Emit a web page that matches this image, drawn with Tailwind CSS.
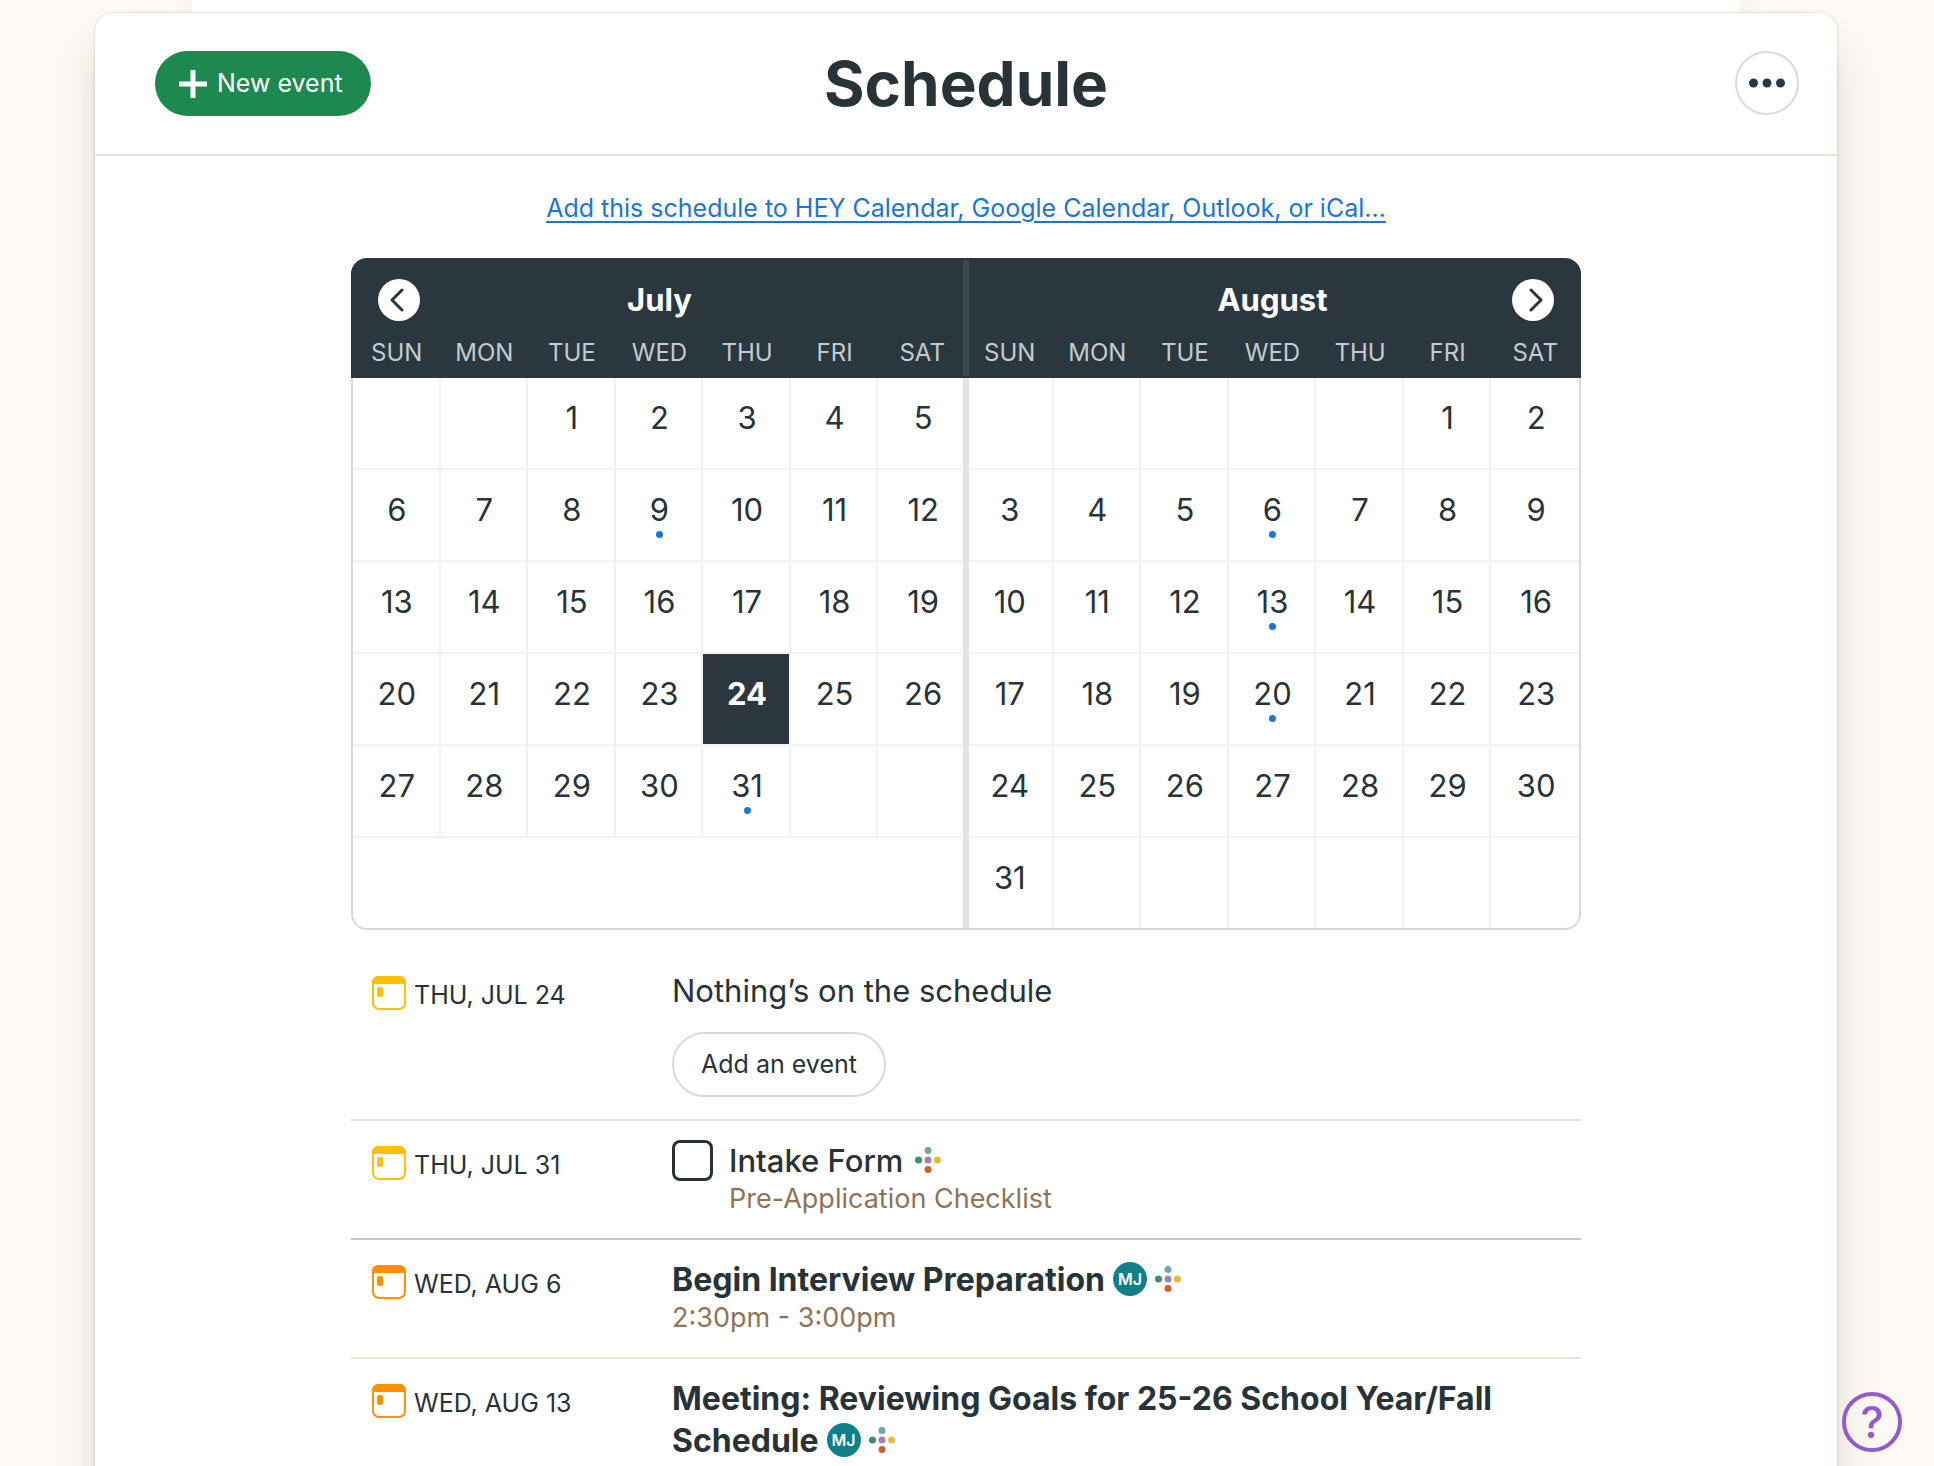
<!DOCTYPE html>
<html lang="en">
<head>
    <meta charset="UTF-8">
    <meta name="viewport" content="width=device-width, initial-scale=1.0">
    <title>Schedule</title>
    <script src="https://cdn.jsdelivr.net/npm/@tailwindcss/browser@4"></script>
</head>
<body class="bg-[#fcf9f5] font-['Inter',sans-serif] text-[#283338] overflow-x-hidden">
    <svg class="hidden">
        <symbol id="cal" viewBox="0 0 34 34">
            <rect x="1" y="1" width="32" height="32" rx="6" fill="none" stroke="currentColor" stroke-width="2"/>
            <path d="M0 8V6a6 6 0 0 1 6-6h22a6 6 0 0 1 6 6v2z" fill="currentColor"/>
            <rect x="5" y="11" width="6" height="10" rx="2" fill="currentColor"/>
        </symbol>
        <symbol id="dots" viewBox="0 0 26 26">
            <circle cx="13" cy="3.500" r="3.500" fill="#6fa5ae"/>
            <circle cx="3.500" cy="13" r="3.500" fill="#3f8f6f"/>
            <circle cx="13" cy="13" r="3.500" fill="#a67fb5"/>
            <circle cx="22.500" cy="13" r="3.500" fill="#e3bb35"/>
            <circle cx="13" cy="22.500" r="3.500" fill="#cf5f2c"/>
        </symbol>
    </svg>

    <!-- Parent sheet -->
    <div class="mr-[194px] ml-[192px] h-[13px] bg-white shadow-[0_0_24px_rgba(90,60,20,0.14)]"></div>

    <!-- Schedule sheet -->
    <main class="relative mr-[97px] ml-[95px] rounded-t-[18px] bg-white pb-6 shadow-[0_0_3px_rgba(90,60,20,0.25),0_36px_40px_rgba(90,60,20,0.16)]">
        <header class="grid grid-cols-[1fr_auto_1fr] items-start border-b-2 border-[#efe1d8] p-[38px]">
            <button class="ml-[22px] flex h-[65px] items-center gap-[10px] justify-self-start rounded-full bg-[#1d8850] pr-7 pl-6 text-[25px] text-white">
                <svg class="size-[28px]" viewBox="0 0 28 28" stroke="currentColor" stroke-width="5"><path d="M14 0v28M0 14h28"/></svg>
                New event
            </button>
            <h1 class="text-[62px] leading-[65px] font-bold">Schedule</h1>
            <button class="flex size-[64px] items-center justify-center justify-self-end rounded-full border-2 border-[#d9d9d9]" aria-label="More options">
                <svg class="h-[10px] w-[36px]" viewBox="0 0 36 10" fill="#283840"><circle cx="4.500" cy="5" r="4.500"/><circle cx="18" cy="5" r="4.500"/><circle cx="31.500" cy="5" r="4.500"/></svg>
            </button>
        </header>

        <div class="mx-auto max-w-[1230px]">
            <p class="pt-8 pb-[30px] text-center text-[25px] leading-10">
                <a href="#" class="text-[#1b76d2] underline underline-offset-4">Add this schedule to HEY Calendar, Google Calendar, Outlook, or iCal…</a>
            </p>

            <!-- Two month calendar -->
            <section class="relative rounded-[16px] border-2 border-t-0 border-[#d9d9d9]">
                <div class="-mx-[2px] grid grid-cols-2 rounded-t-[16px] bg-[#2b373e] px-[2px] text-white">
                    <div class="flex h-[83px] items-center">
                        <button class="ml-[25px] flex size-[42px] items-center justify-center rounded-full bg-white" aria-label="Previous month">
                            <svg class="size-[24px]" viewBox="0 0 24 24" fill="none" stroke="#2b373e" stroke-width="3" stroke-linecap="round" stroke-linejoin="round"><path d="M15 2L5 12l10 10"/></svg>
                        </button>
                        <h2 class="mr-[67px] flex-1 pt-[2px] text-center text-[31px] font-bold">July</h2>
                    </div>
                    <div class="flex h-[83px] items-center">
                        <h2 class="ml-[67px] flex-1 pt-[2px] text-center text-[31px] font-bold">August</h2>
                        <button class="mr-[25px] flex size-[42px] items-center justify-center rounded-full bg-white" aria-label="Next month">
                            <svg class="size-[24px]" viewBox="0 0 24 24" fill="none" stroke="#2b373e" stroke-width="3" stroke-linecap="round" stroke-linejoin="round"><path d="M10 2l10 10-10 10"/></svg>
                        </button>
                    </div>
                </div>
                <div class="grid grid-cols-2 items-start" id="months"></div>
                <div class="absolute inset-y-0 left-1/2 flex w-[6px] -translate-x-1/2 flex-col">
                    <div class="mt-[2px] h-[116px] bg-[#3d484f]"></div>
                    <div class="mt-[2px] flex-1 bg-[#e3e3e3]"></div>
                </div>
            </section>

            <!-- Agenda -->
            <ul>
                <li class="flex border-b-2 border-[#efe1d8] pt-[40px] pb-[22px] pl-[21px]">
                    <div class="flex w-[300px] items-center gap-2 self-start pt-[6px] text-[25px] leading-[36px]">
                        <svg class="mb-[3px] size-[34px] text-[#ffc000]"><use href="#cal"/></svg>THU, JUL 24
                    </div>
                    <div>
                        <p class="text-[31px] leading-[42px]">Nothing’s on the schedule</p>
                        <button class="mt-[20px] h-[65px] rounded-full border-2 border-[#d9d9d9] px-[27px] text-[25px]">Add an event</button>
                    </div>
                </li>
                <li class="flex border-b-2 border-[#d3c4b9] pt-[19px] pb-[22px] pl-[21px]">
                    <div class="flex w-[300px] items-center gap-2 self-start pt-[6px] text-[25px] leading-[36px]">
                        <svg class="mb-[3px] size-[34px] text-[#ffc000]"><use href="#cal"/></svg>THU, JUL 31
                    </div>
                    <div class="flex items-start gap-4">
                        <input type="checkbox" id="intake" class="size-[41px] appearance-none rounded-[8px] border-3 border-[#283338]">
                        <div>
                            <label for="intake" class="flex items-center gap-3 text-[31px] leading-[42px] font-medium">Intake Form <svg class="mb-[3px] size-[26px]"><use href="#dots"/></svg></label>
                            <p class="text-[27px] leading-[34px] text-[#8f7358]">Pre-Application Checklist</p>
                        </div>
                    </div>
                </li>
                <li class="flex border-b-2 border-[#efe1d8] pt-[19px] pb-[22px] pl-[21px]">
                    <div class="flex w-[300px] items-center gap-2 self-start pt-[6px] text-[25px] leading-[36px]">
                        <svg class="mb-[3px] size-[34px] text-[#ff9100]"><use href="#cal"/></svg>WED, AUG 6
                    </div>
                    <div>
                        <p class="flex items-center gap-2 text-[32px] leading-[42px] font-bold">Begin Interview Preparation
                            <span class="mb-[3px] flex size-[34px] items-center justify-center rounded-full bg-[#0f8088] text-[16px] font-semibold text-white">MJ</span>
                            <svg class="mb-[3px] size-[26px]"><use href="#dots"/></svg>
                        </p>
                        <p class="text-[27px] leading-[34px] text-[#8f7358]">2:30pm - 3:00pm</p>
                    </div>
                </li>
                <li class="flex pt-[19px] pl-[21px]">
                    <div class="flex w-[300px] items-center gap-2 self-start pt-[6px] text-[25px] leading-[36px]">
                        <svg class="mb-[3px] size-[34px] text-[#ff9100]"><use href="#cal"/></svg>WED, AUG 13
                    </div>
                    <p class="flex-1 text-[32px] leading-[42px] font-bold">Meeting: Reviewing Goals for 25-26 School Year/Fall
                        <span class="flex items-center gap-2">Schedule
                            <span class="mb-[3px] flex size-[34px] items-center justify-center rounded-full bg-[#0f8088] text-[16px] font-semibold text-white">MJ</span>
                            <svg class="mb-[3px] size-[26px]"><use href="#dots"/></svg>
                        </span>
                    </p>
                </li>
            </ul>
        </div>
    </main>

    <button class="fixed right-[32px] bottom-[14px] flex size-[60px] items-center justify-center rounded-full border-4 border-[#915bd0] text-[44px] font-medium text-[#915bd0]" aria-label="Help">?</button>

    <script>
        const DAYS = ['SUN', 'MON', 'TUE', 'WED', 'THU', 'FRI', 'SAT'];
        const MONTHS = [
            { name: 'July', start: 2, length: 31, rows: 5, today: 24, events: [9, 31] },
            { name: 'August', start: 5, length: 31, rows: 6, events: [6, 13, 20] }
        ];

        function renderDay(month, index) {
            const day = index - month.start + 1;
            const inMonth = day > 0 && day <= month.length;
            const isToday = day === month.today;
            const dot = month.events.includes(day)
                ? '<span class="mx-auto mt-[2px] block size-[7px] rounded-full bg-[#1b76d2]"></span>' : '';
            // the sixth week sits on the calendar's own bottom border
            const height = index < 35 ? 'h-[92px] border-b-2' : 'h-[90px]';
            return `<td class="${height} border-[#f1f1f1] p-0 pt-[20px] pl-[2px] align-top text-[31px] leading-[39px] ${index % 7 < 6 ? 'border-r-2' : ''} ${isToday ? 'bg-[#2b373e] bg-clip-padding font-bold text-white' : ''}">${inMonth ? day : ''}${dot}</td>`;
        }

        document.getElementById('months').innerHTML = MONTHS.map(month => {
            const head = DAYS.map(d => `<th class="h-[37px] bg-[#2b373e] p-0 pb-[14px] text-[24px] leading-[23px] font-normal first:shadow-[-2px_0_#2b373e] last:shadow-[2px_0_#2b373e]">${d}</th>`).join('');
            let body = '';
            for (let r = 0; r < month.rows; r++) {
                body += '<tr>';
                for (let c = 0; c < 7; c++) body += renderDay(month, r * 7 + c);
                body += '</tr>';
            }
            return `<table class="w-full table-fixed border-separate border-spacing-0 text-center" aria-label="${month.name}">
                <thead class="text-[#c3cbd0]"><tr>${head}</tr></thead>
                <tbody>${body}</tbody>
            </table>`;
        }).join('');
    </script>
</body>
</html>
